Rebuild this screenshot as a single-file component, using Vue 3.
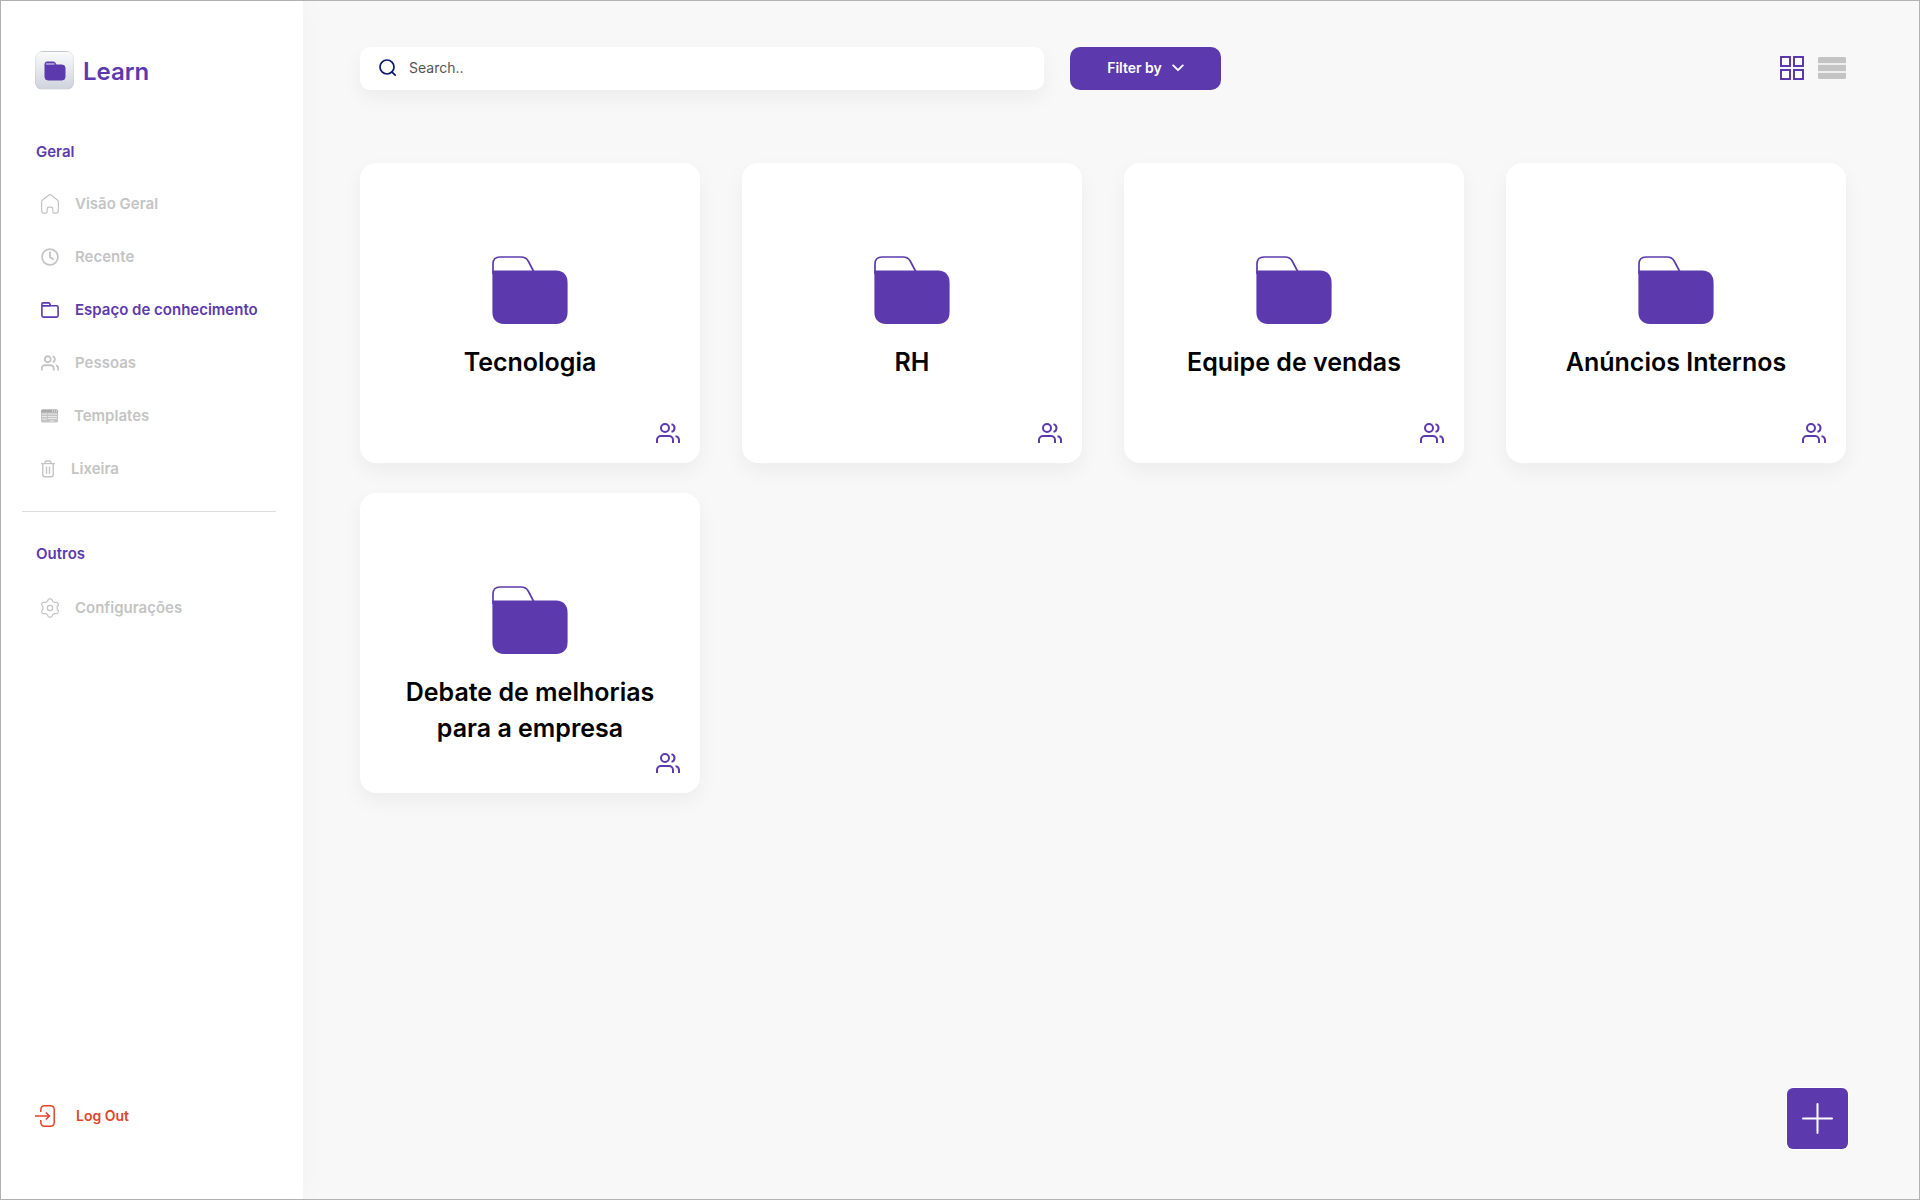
<script setup>
import { ref } from 'vue'

const general = [
  { id: 'home', label: 'Visão Geral' },
  { id: 'recent', label: 'Recente' },
  { id: 'space', label: 'Espaço de conhecimento' },
  { id: 'people', label: 'Pessoas' },
  { id: 'templates', label: 'Templates' },
  { id: 'trash', label: 'Lixeira' },
]
const active = ref('space')
const query = ref('')
const view = ref('grid')
const folders = [
  'Tecnologia',
  'RH',
  'Equipe de vendas',
  'Anúncios Internos',
  'Debate de melhorias para a empresa',
]

// Six-lobed gear outline around (9, 10)
const gear = Array.from({ length: 96 }, (_, i) => {
  const t = (i / 96) * Math.PI * 2
  const r = 8.1 + 1.1 * Math.tanh(1.8 * Math.cos(6 * t))
  return `${(9 + r * Math.sin(t)).toFixed(2)},${(10 - r * Math.cos(t)).toFixed(2)}`
}).join(' ')
</script>

<template>
  <div class="app">
    <aside class="sidebar">
      <a class="brand" href="#">
        <span class="brand-tile">
          <svg width="22" height="20" viewBox="0 0 22 20" fill="none">
            <path d="M1 6V3Q1 1 3 1H9.500Q11 1 11.500 2.500L12 4H18Q21 4 21 7V16Q21 19 18 19H4Q1 19 1 16Z" fill="#5c3aad" stroke="#5c3aad" />
            <path d="M2 3H10.500" stroke="#e9e6f3" stroke-width="1" />
          </svg>
        </span>
        <span class="brand-name">Learn</span>
      </a>

      <h2 class="group">Geral</h2>
      <nav class="nav" aria-label="Geral">
        <a v-for="item in general" :key="item.id" href="#" class="nav-link" :class="{ active: active === item.id }" @click.prevent="active = item.id">
          <svg v-if="item.id === 'home'" width="18" height="20" viewBox="0 0 18 20" fill="none" stroke="currentColor" stroke-width="1.200">
            <path d="M.600 8Q.600 6.800 1.600 6L7.600 1.200Q9 .200 10.400 1.200L16.400 6Q17.400 6.800 17.400 8V16.400Q17.400 19.200 14.600 19.200H13.400Q11.800 19.200 11.800 17.600V15Q11.800 13.200 10 13.200H8Q6.200 13.200 6.200 15V17.600Q6.200 19.200 4.600 19.200H3.400Q.600 19.200 .600 16.400Z" />
          </svg>
          <svg v-else-if="item.id === 'recent'" width="18" height="18" viewBox="0 0 18 18" fill="none" stroke="currentColor" stroke-width="1.800">
            <circle cx="9" cy="9" r="7.900" /><path d="M9 3.500V9.300L12.800 11.400" />
          </svg>
          <svg v-else-if="item.id === 'space'" width="18" height="16" viewBox="0 0 18 16" fill="none" stroke="currentColor" stroke-width="1.600">
            <path d="M.900 4V2Q.900 .900 2 .900H7.500Q8.300 .900 8.700 1.700L9.500 3.700H15.500Q17.100 3.700 17.100 5.300V13.500Q17.100 15.100 15.500 15.100H2.500Q.900 15.100 .900 13.500ZM.900 3.900H9.500" />
          </svg>
          <svg v-else-if="item.id === 'people'" width="18" height="16" viewBox="0 2 24 20" fill="none" stroke="currentColor" stroke-width="2.400">
            <path d="M17 22v-3a4 4 0 0 0-4-4H5a4 4 0 0 0-4 4v3M23 22v-3a4 4 0 0 0-3-3.870M15.500 3.130a4 4 0 0 1 0 7.750" /><circle cx="9" cy="7" r="4" />
          </svg>
          <svg v-else-if="item.id === 'templates'" width="17" height="14" viewBox="0 0 17 14">
            <rect y=".5" width="17" height="13" rx="1.500" fill="#c4c4c4" />
            <path d="M0 3.500V2Q0 .5 1.500 .5H15.500Q17 .5 17 2V3.500Z" fill="#aaa" />
            <path d="M11 2H12M13 2H14M15 2H16" stroke="#fff" stroke-width="1" />
            <path d="M1 5H6M1 7.500H6M1 10H6M7 5H16M7 7.500H16M7 9.500H16M9 12H13" stroke="#f2f2f2" stroke-width=".8" />
          </svg>
          <svg v-else width="14" height="18" viewBox="0 0 14 18" fill="none" stroke="currentColor" stroke-width="1.400">
            <path d="M0 3.600H14M4.200 3.600V2.200Q4.200 1 5.400 1H8.600Q9.800 1 9.800 2.200V3.600M1.800 3.600V14.800Q1.800 16.800 3.800 16.800H10.200Q12.200 16.800 12.200 14.800V3.600M5.500 6.500V13.800M8.500 6.500V13.800" />
          </svg>
          <span>{{ item.label }}</span>
        </a>
      </nav>

      <hr class="rule" />

      <h2 class="group">Outros</h2>
      <nav class="nav" aria-label="Outros">
        <a href="#" class="nav-link">
          <svg width="18" height="20" viewBox="0 0 18 20" fill="none" stroke="currentColor" stroke-width="1.200" stroke-linejoin="round">
            <polygon :points="gear" />
            <circle cx="9" cy="10" r="2.600" />
          </svg>
          <span>Configurações</span>
        </a>
      </nav>

      <a href="#" class="logout">
        <svg width="21" height="22" viewBox="0 0 21 22" fill="none" stroke="currentColor" stroke-width="1.500">
          <path d="M5.800 7V4.800Q5.800 .800 9.800 .800H15.200Q19.200 .800 19.200 4.800V17.200Q19.200 21.200 15.200 21.200H9.800Q5.800 21.200 5.800 17.200V15M0 11H14.500M10.800 7.500L14.500 11L10.800 14.500" />
        </svg>
        <span>Log Out</span>
      </a>
    </aside>

    <main class="main">
      <header class="toolbar">
        <label class="search">
          <svg width="18" height="18" viewBox="0 0 18 18" fill="none" stroke="#0b1a6e" stroke-width="1.700">
            <circle cx="8" cy="8" r="7" /><path d="M12.800 12.800L16.200 16.200" stroke-linecap="round" />
          </svg>
          <input v-model="query" type="text" placeholder="Search.." aria-label="Search" />
        </label>
        <button class="filter" type="button" aria-haspopup="true">
          Filter by
          <svg width="12" height="8" viewBox="0 0 12 8" fill="none" stroke="#fff" stroke-width="1.900" stroke-linecap="round" stroke-linejoin="round">
            <path d="M1.200 1.400L6 6.200L10.800 1.400" />
          </svg>
        </button>
        <div class="views">
          <button type="button" aria-label="Grade" :aria-pressed="view === 'grid'" @click="view = 'grid'">
            <svg width="24" height="24" viewBox="0 0 24 24" fill="#fff" stroke="#5c3aad" stroke-width="2">
              <path d="M1 1H10V10H1ZM14 1H23V10H14ZM1 14H10V23H1ZM14 14H23V23H14Z" />
            </svg>
          </button>
          <button type="button" aria-label="Lista" :aria-pressed="view === 'list'" @click="view = 'list'">
            <svg width="28" height="22" viewBox="0 0 28 22">
              <rect width="28" height="22" rx="1" fill="#eee" />
              <path d="M1 0H27L28 1V6H0V1ZM0 8H28V14H0ZM0 16H28V21L27 22H1L0 21Z" fill="#c4c4c4" />
            </svg>
          </button>
        </div>
      </header>

      <section class="grid" aria-label="Pastas">
        <article v-for="name in folders" :key="name" class="card">
          <svg width="76" height="68" viewBox="0 0 76 68" fill="none">
            <path d="M1 18V8Q1 1 8 1H29Q34 1 36.200 5L42 16" stroke="#5c3aad" stroke-width="1.700" />
            <path d="M.400 14.600H64Q75.600 15.400 75.600 27V56Q75.600 67.200 64 68H12Q.400 67.200 .400 56Z" fill="#5c3aad" />
          </svg>
          <h3>{{ name }}</h3>
          <button class="members" type="button" aria-label="Membros">
            <svg width="24" height="20" viewBox="0 2 24 20" fill="none" stroke="#5c3aad" stroke-width="2">
              <path d="M17 22v-3a4 4 0 0 0-4-4H5a4 4 0 0 0-4 4v3M23 22v-3a4 4 0 0 0-3.500-3.870M15.500 3.130a4 4 0 0 1 0 7.750" /><circle cx="9" cy="7" r="4" />
            </svg>
          </button>
        </article>
      </section>

      <button class="add" type="button" aria-label="Adicionar">
        <svg width="31" height="31" viewBox="0 0 31 31" stroke="#fff" stroke-width="2" stroke-linecap="round">
          <path d="M15.500 1V30M1 15.500H30" />
        </svg>
      </button>
    </main>
  </div>
</template>

<style>
body {
  margin: 0;
}
</style>

<style scoped>
* {
  box-sizing: border-box;
}
.app {
  display: flex;
  min-height: 100vh;
  border: 1px solid #b3b3b3;
  background: #f8f8f8;
  font-family: "Inter", sans-serif;
  font-size: 14px;
  line-height: 22px;
}
svg {
  display: block;
  flex: none;
}
a {
  text-decoration: none;
}
button {
  padding: 0;
  border: 0;
  background: none;
  font: inherit;
  cursor: pointer;
}
.sidebar {
  display: flex;
  flex-direction: column;
  flex: none;
  width: 302px;
  padding: 50px 0 72px;
  background: #fff;
  box-shadow: 0 0 30px rgba(0, 0, 0, 0.03);
}
.brand {
  display: flex;
  align-items: center;
  gap: 9px;
  padding-left: 34px;
  color: #5c3aad;
}
.brand-tile {
  display: flex;
  align-items: center;
  justify-content: center;
  width: 39px;
  height: 39px;
  border: 1px solid rgba(0, 0, 0, 0.05);
  border-radius: 8px;
  background: linear-gradient(#fafafb, #cfd3dc);
}
.brand-name {
  padding-top: 2px;
  font-size: 24px;
  font-weight: 600;
  line-height: 36px;
}
.group {
  margin: 51px 0 30px 35px;
  color: #5c3aad;
  font-size: 15px;
  font-weight: 600;
  line-height: 22px;
}
.nav {
  display: flex;
  flex-direction: column;
  gap: 31px;
  padding-left: 40px;
}
.nav-link {
  display: flex;
  align-items: center;
  gap: 16px;
  height: 22px;
  color: #c4c4c4;
  font-size: 15px;
  font-weight: 600;
}
.nav-link.active {
  color: #5c3aad;
}
.rule {
  width: auto;
  margin: 31px 27px 0 21px;
  border: 0;
  border-top: 1px solid #dedede;
}
.rule + .group {
  margin-top: 31px;
  margin-bottom: 32px;
}
.logout {
  display: flex;
  align-items: center;
  gap: 20px;
  margin-top: auto;
  padding-left: 34px;
  color: #e0452b;
  font-weight: 600;
}
.main {
  flex: 1;
  min-width: 0;
  padding: 46px 73px 46px 57px;
}
.toolbar {
  display: flex;
  align-items: center;
  margin-bottom: 73px;
}
.search {
  display: flex;
  align-items: center;
  gap: 12px;
  flex: 0 1 684px;
  height: 43px;
  padding: 0 19px 2px;
  border-radius: 10px;
  background: #fff;
  box-shadow: 0 8px 20px rgba(0, 0, 0, 0.05);
}
.search input {
  flex: 1;
  min-width: 0;
  padding: 0;
  border: 0;
  outline: 0;
  background: none;
  color: #444;
  font: inherit;
}
.search input::placeholder {
  color: #555;
  opacity: 1;
}
.filter {
  display: flex;
  align-items: center;
  justify-content: center;
  gap: 10px;
  width: 151px;
  height: 43px;
  margin-left: 26px;
  padding-bottom: 2px;
  border-radius: 10px;
  background: #5c3aad;
  color: #fff;
  font-weight: 600;
}
.views {
  display: flex;
  align-items: center;
  gap: 14px;
  margin-left: auto;
  padding-bottom: 2px;
}
.grid {
  display: grid;
  grid-template-columns: repeat(4, 1fr);
  gap: 30px 42px;
}
.card {
  display: flex;
  flex-direction: column;
  align-items: center;
  min-height: 300px;
  padding: 93px 20px 20px;
  border-radius: 16px;
  background: #fff;
  box-shadow: 0 8px 20px rgba(0, 0, 0, 0.05);
}
.card h3 {
  max-width: 280px;
  margin: 20px 0 0;
  color: #000;
  font-size: 25px;
  font-weight: 600;
  line-height: 36px;
  text-align: center;
}
.members {
  align-self: flex-end;
  margin-top: auto;
}
.add {
  position: fixed;
  right: 72px;
  bottom: 51px;
  display: flex;
  align-items: center;
  justify-content: center;
  width: 61px;
  height: 61px;
  border-radius: 6px;
  background: #5c3aad;
  box-shadow: 0 0 0 1px #fff;
}
</style>
